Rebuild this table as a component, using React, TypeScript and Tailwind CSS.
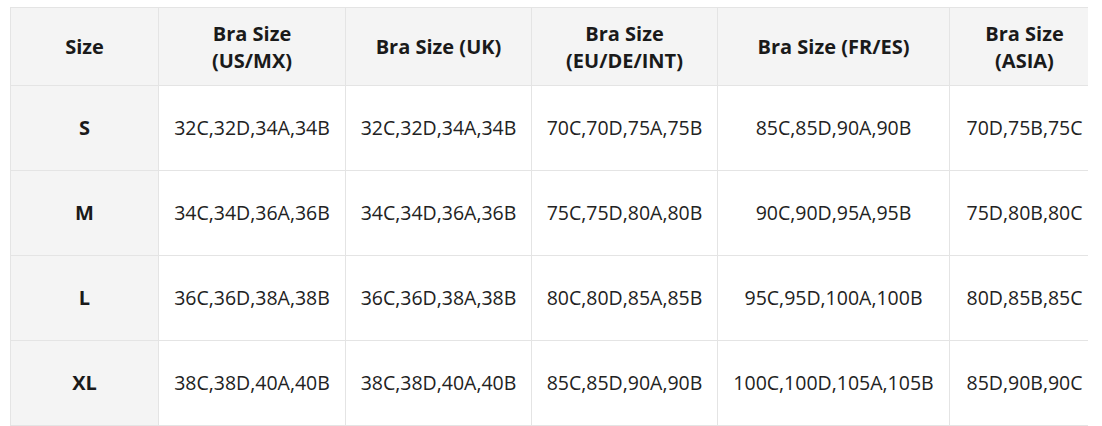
import React from 'react';

const headers = [
  'Size',
  'Bra Size (US/MX)',
  'Bra Size (UK)',
  'Bra Size (EU/DE/INT)',
  'Bra Size (FR/ES)',
  'Bra Size (ASIA)',
];

const rows = [
  ['S', '32C,32D,34A,34B', '32C,32D,34A,34B', '70C,70D,75A,75B', '85C,85D,90A,90B', '70D,75B,75C'],
  ['M', '34C,34D,36A,36B', '34C,34D,36A,36B', '75C,75D,80A,80B', '90C,90D,95A,95B', '75D,80B,80C'],
  ['L', '36C,36D,38A,38B', '36C,36D,38A,38B', '80C,80D,85A,85B', '95C,95D,100A,100B', '80D,85B,85C'],
  ['XL', '38C,38D,40A,40B', '38C,38D,40A,40B', '85C,85D,90A,90B', '100C,100D,105A,105B', '85D,90B,90C'],
];

const widths = ['w-[148px]', 'w-[187px]', 'w-[186px]', 'w-[186px]', 'w-[232px]', 'w-[150px]'];

export default function App() {
  return (
    <div className="bg-white w-[1102px] h-[426px] pt-[7px] pl-[10px] font-['Open_Sans',sans-serif] text-[#1a1a1a]">
      <div className="w-[1078px] overflow-hidden">
        <table className="table-fixed border-collapse w-[1090px] text-center">
          <colgroup>
            {widths.map((w, i) => (
              <col key={i} className={w} />
            ))}
          </colgroup>
          <thead>
            <tr className="h-[78px] bg-[#f4f4f4]">
              {headers.map((h) => (
                <th key={h} className="border border-[#e4e4e4] px-5 text-[20px] leading-[27px] font-bold">
                  {h}
                </th>
              ))}
            </tr>
          </thead>
          <tbody>
            {rows.map((row) => (
              <tr key={row[0]} className="h-[85px]">
                {row.map((cell, i) => (
                  <td
                    key={i}
                    className={
                      i === 0
                        ? 'border border-[#e4e4e4] bg-[#f4f4f4] px-3 text-[20px] font-bold'
                        : 'border border-[#e4e4e4] px-2 text-[19.5px] text-[#222]'
                    }
                  >
                    {cell}
                  </td>
                ))}
              </tr>
            ))}
          </tbody>
        </table>
      </div>
    </div>
  );
}
